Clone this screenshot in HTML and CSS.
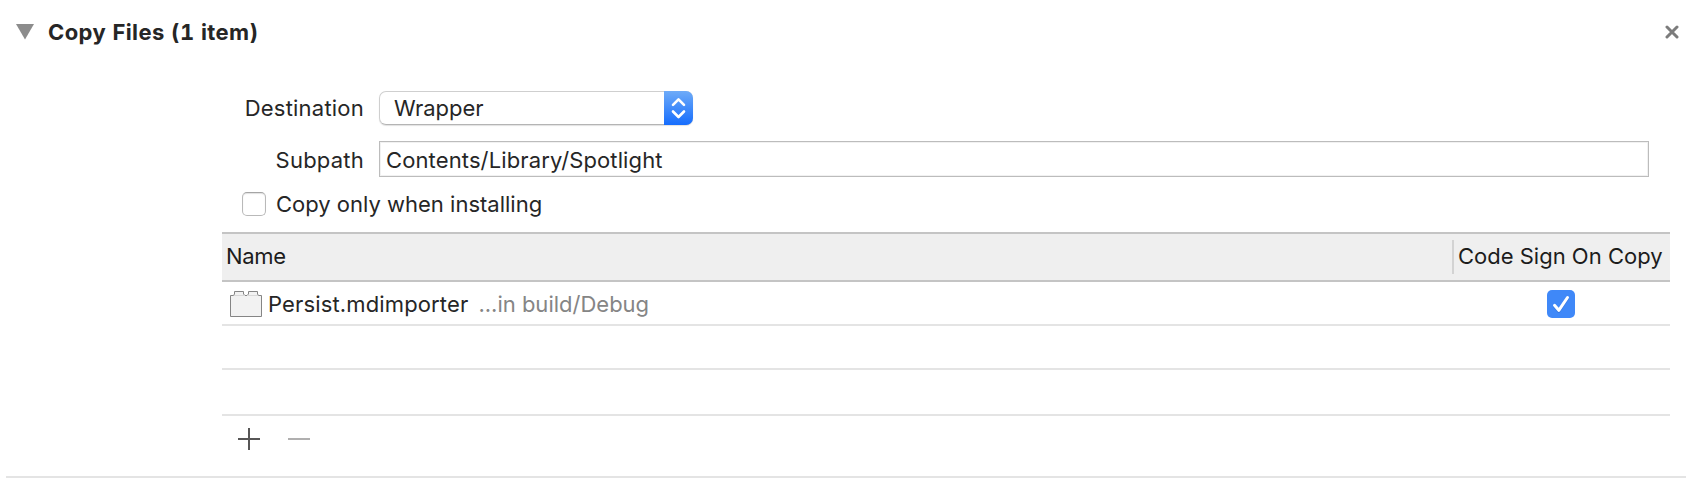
FILE: index.html
```
<!DOCTYPE html>
<html lang="en">
<head>
<meta charset="utf-8">
<title>Copy Files</title>
<link rel="stylesheet" href="styles.css">
</head>
<body>
<section class="phase">
  <header class="phase-header">
    <svg class="disclosure" width="18" height="16" viewBox="0 0 18 16"><path d="M0 0H18L9 15.4Z" fill="#8c8c8c"/></svg>
    <h1 class="title">Copy Files (1 item)</h1>
    <svg class="close" width="14" height="14" viewBox="0 0 14 14"><path d="M2 2L12 12M12 2L2 12" stroke="#7c7c7c" stroke-width="3" stroke-linecap="round"/></svg>
  </header>
  <div class="form">
    <div class="field destination">
      <span class="label"><span class="t-destination">Destination</span></span>
      <div class="popup">
        <span class="popup-value">Wrapper</span>
        <span class="popup-arrows"><svg width="29" height="34" viewBox="0 0 29 34" fill="none" stroke="#fff" stroke-width="2.6" stroke-linecap="round" stroke-linejoin="round"><path d="M9 13.8L14.5 8.3L20 13.8M9 20.5L14.5 26L20 20.5"/></svg></span>
      </div>
    </div>
    <div class="field subpath">
      <span class="label"><span class="t-subpath">Subpath</span></span>
      <div class="input"><span class="t-path">Contents/Library/Spotlight</span></div>
    </div>
    <div class="option">
      <span class="checkbox"></span>
      <span class="t-option">Copy only when installing</span>
    </div>
  </div>
  <div class="table">
    <div class="row head">
      <div class="cell-name"><span class="t-name">Name</span></div>
      <div class="cell-sign"><span class="t-sign">Code Sign On Copy</span></div>
    </div>
    <div class="row">
      <div class="cell-file">
        <svg class="brick" width="32" height="26" viewBox="0 0 32 26"><path d="M.5 4.5H3.5L4.5 .5H13.5L14.5 4.5H17.5L18.5 .5H27.5L28.5 4.5H31.5V25.5H.5Z" fill="#f2f2f2"/><path d="M.5 4.5V25.5H31.5V4.5" fill="none" stroke="#858585"/><path d="M.5 4.5H3.5L4.5 3V.5H13.5V3L15 4.5H17L18.5 3V.5H27.5V3L28.5 4.5H31.5" fill="none" stroke="#858585"/><path d="M4 4.5H14M18 4.5H28" stroke="#d8d8d8"/></svg>
        <span class="t-file">Persist.mdimporter</span>
        <span class="t-location">...in build/Debug</span>
      </div>
      <div class="cell-check">
        <span class="checked"><svg width="28" height="28" viewBox="0 0 28 28" fill="none" stroke-linecap="round" stroke-linejoin="round"><path d="M7.5 16.3L11.8 21.5L20.5 8.5" stroke="#2866c8" stroke-opacity=".45" stroke-width="3"/><path d="M7.5 15.3L11.8 20.3L20.5 7.5" stroke="#fff" stroke-width="3"/></svg></span>
      </div>
    </div>
    <div class="row"></div>
    <div class="row last"></div>
  </div>
  <div class="actions">
    <svg width="22" height="22" viewBox="0 0 22 22"><path d="M0 11H22M11 0V22" stroke="#575656" stroke-width="2"/></svg>
    <svg width="22" height="22" viewBox="0 0 22 22"><path d="M0 11H22" stroke="#b0afaf" stroke-width="2"/></svg>
  </div>
</section>
</body>
</html>
```
FILE: styles.css
```
* { box-sizing: border-box; }
body {
  margin: 0;
  background: #fff;
  color: #262626;
  font: 22px/28px Inter, "Liberation Sans", sans-serif;
  white-space: nowrap;
}
svg { display: block; flex: none; }
.phase {
  height: 478px;
  margin: 0 4px 0 6px;
  border-bottom: 2px solid #e4e4e4;
}
.phase-header {
  display: flex;
  align-items: flex-start;
  height: 91px;
  padding: 24px 7px 0 10px;
}
.title {
  margin: -6px 0 0 14px;
  font-size: 22px;
  line-height: 28px;
  font-weight: 700;
  letter-spacing: .4px;
  font-variant-numeric: tabular-nums;
}
.close { margin: 1px 0 0 auto; }
.form { height: 141px; padding-left: 216px; }
.field { display: flex; }
.label {
  width: 142px;
  margin-right: 15px;
  display: flex;
  justify-content: flex-end;
  letter-spacing: .22px;
}
.destination { height: 50px; }
.destination .label { padding-top: 3px; }
.popup {
  display: flex;
  justify-content: space-between;
  width: 314px;
  height: 34px;
  border: 1px solid #cfcfcf;
  border-bottom-color: #b4b4b4;
  border-radius: 7px;
  box-shadow: 0 1px 1px rgba(0, 0, 0, .12);
}
.popup-value { padding: 2px 0 0 14px; }
.popup-arrows {
  width: 29px;
  height: 34px;
  margin: -1px -1px 0 0;
  border-radius: 0 7px 7px 0;
  background: linear-gradient(#6eabf8, #166dfd);
}
.subpath { height: 51px; }
.subpath .label { padding-top: 5px; }
.input {
  width: 1270px;
  height: 36px;
  padding: 4px 0 0 6px;
  border: 1px solid #bcbcbc;
  box-shadow: inset 0 0 0 1px #f1f1f1;
}
.t-path { letter-spacing: .12px; }
.option { display: flex; align-items: flex-start; padding-left: 20px; }
.option .t-option { margin: -2px 0 0 10px; }
.checkbox {
  width: 24px;
  height: 24px;
  border: 1px solid #b9b9b9;
  border-top-color: #a5a5a5;
  border-radius: 5px;
  box-shadow: inset 0 1px 1px #e2e2e2;
}
.table { width: 1448px; margin-left: 216px; }
.row {
  display: flex;
  height: 44px;
  border-bottom: 2px solid #e4e4e4;
}
.row.last { height: 46px; }
.row.head {
  height: 50px;
  border-top: 2px solid #c4c4c4;
  border-bottom-color: #c4c4c4;
  background: #efefef;
  color: #1c1c1c;
}
.cell-name { width: 1230px; padding: 8px 0 0 4px; }
.t-name { letter-spacing: -.3px; }
.cell-sign {
  height: 34px;
  margin-top: 6px;
  padding: 2px 0 0 4px;
  border-left: 2px solid #d3d3d3;
}
.cell-file { display: flex; width: 1325px; padding: 8px 0 0 8px; }
.brick { margin: 1px 6px 0 0; }
.t-file { letter-spacing: .14px; }
.t-location { margin-left: 10px; color: #858585; }
.checked {
  display: block;
  width: 28px;
  height: 28px;
  margin-top: 8px;
  border-radius: 5px;
  background: #3f88f8;
}
.actions { display: flex; gap: 28px; padding: 12px 0 0 232px; }
```
